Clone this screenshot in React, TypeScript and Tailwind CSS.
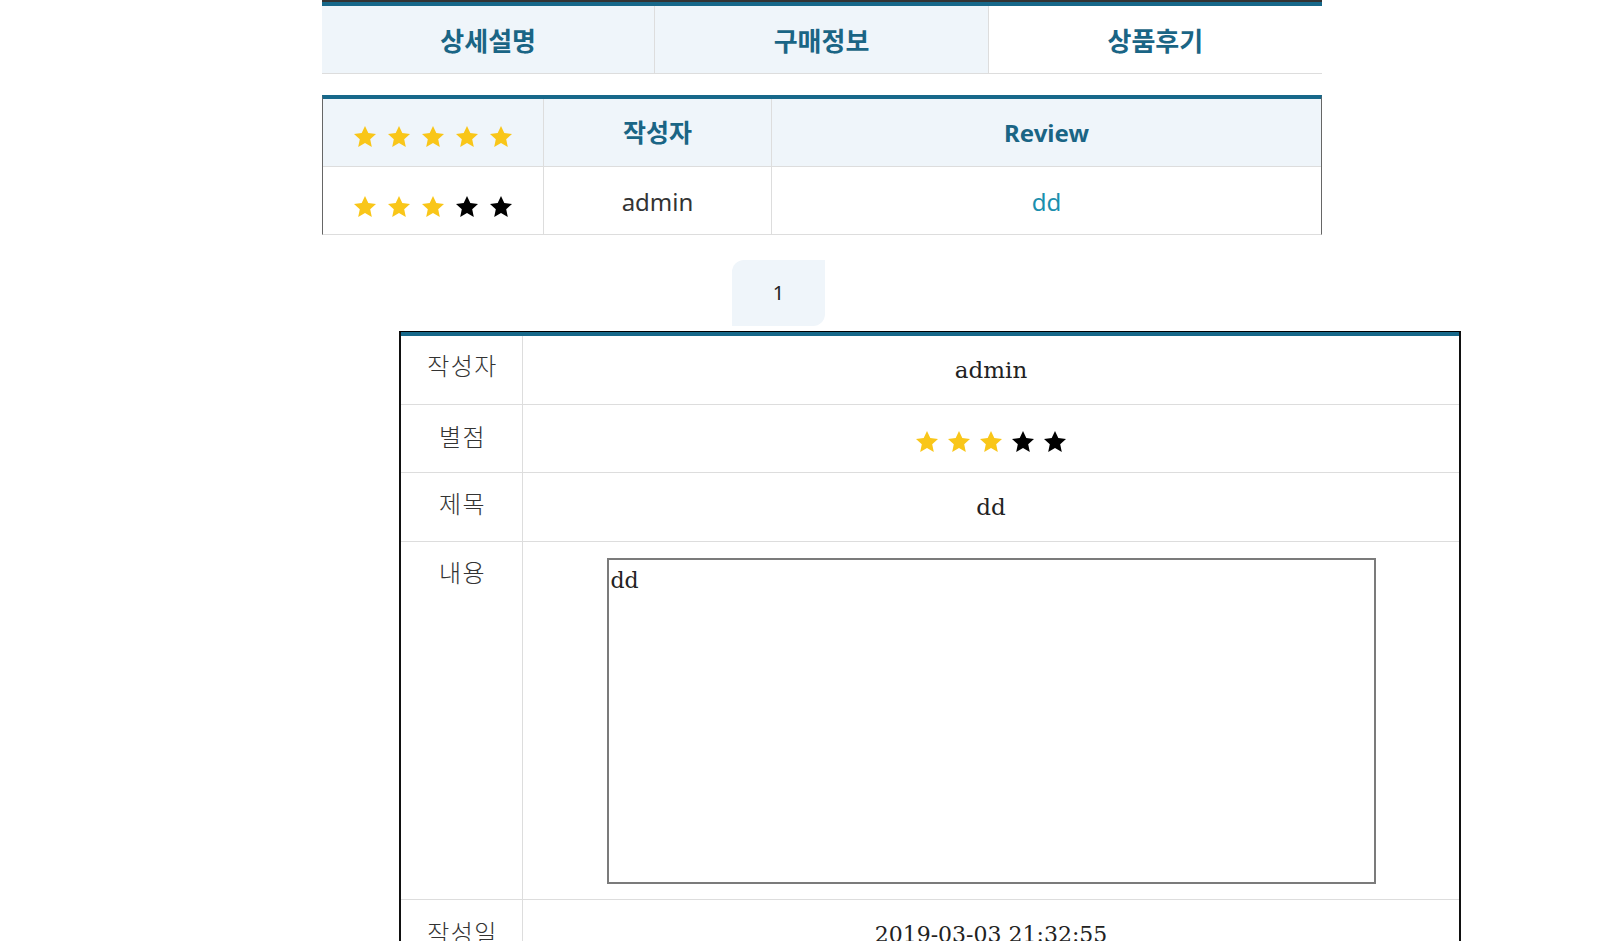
type StarRowProps = {
  filled: number;
  size: number;
  gapClass: string;
};

const Star = ({ color, size }: { color: string; size: number }) => (
  <svg width={size} height={size} viewBox="0 0 24 24" fill={color}>
    <polygon points="12,1 15.3,8.1 23,8.9 17.2,14.2 18.8,22 12,18 5.2,22 6.8,14.2 1,8.9 8.7,8.1" />
  </svg>
);

const StarRow: React.FC<StarRowProps> = ({ filled, size, gapClass }) => (
  <div className={`flex items-center ${gapClass}`}>
    {[0, 1, 2, 3, 4].map((i) => (
      <Star key={i} size={size} color={i < filled ? "#f9c619" : "#000000"} />
    ))}
  </div>
);

const tabs = [
  { label: "상세설명", active: false },
  { label: "구매정보", active: false },
  { label: "상품후기", active: true },
];

const labelCls =
  "flex justify-center border-r border-r-[#dddddd] pl-[2px] font-['Noto_Sans_CJK_KR',sans-serif] font-light text-[24px] tracking-[1.5px] text-[#333]";
const valueCls =
  "flex items-center justify-center font-['DejaVu_Serif','Noto_Sans_CJK_KR',serif] text-[23px] text-[#222]";

export default function App() {
  return (
    <div className="min-h-screen bg-white font-['Noto_Sans','Noto_Sans_CJK_KR',sans-serif]">
      {/* tabs */}
      <div className="ml-[322px] w-[1000px] border-t-2 border-t-[#333333]">
        <div className="grid grid-cols-3 border-t-4 border-t-[#17688a] border-b border-b-[#dddddd]">
          {tabs.map((t, i) => (
            <div
              key={t.label}
              className={`flex h-[67px] items-center justify-center pt-[3px] text-[26px] font-bold text-[#1a6585] ${
                t.active ? "bg-white" : "bg-[#eff5fa]"
              } ${i < 2 ? "border-r border-r-[#dddddd]" : ""}`}
            >
              {t.label}
            </div>
          ))}
        </div>
      </div>

      {/* review list */}
      <div className="ml-[322px] mt-[21px] w-[1000px] border-t-4 border-t-[#17688a] border-x border-x-[#666666] border-b border-b-[#dddddd]">
        <div className="grid h-[68px] grid-cols-[221px_228px_1fr] border-b border-b-[#dddddd] bg-[#eff5fa]">
          <div className="flex items-center justify-center border-r border-r-[#dddddd] pt-[9px]">
            <StarRow filled={5} size={24} gapClass="gap-[10px]" />
          </div>
          <div className="flex items-center justify-center border-r border-r-[#dddddd] text-[25px] font-bold text-[#1a6585]">
            작성자
          </div>
          <div className="flex items-center justify-center text-[24px] font-bold text-[#1a6585]">
            Review
          </div>
        </div>
        <div className="grid h-[67px] grid-cols-[221px_228px_1fr]">
          <div className="flex items-center justify-center border-r border-r-[#dddddd] pt-[12px]">
            <StarRow filled={3} size={24} gapClass="gap-[10px]" />
          </div>
          <div className="flex items-center justify-center border-r border-r-[#dddddd] pt-[2px] text-[24px] text-[#333]">
            admin
          </div>
          <div className="flex items-center justify-center pt-[2px] text-[24px] text-[#1b8fae]">
            dd
          </div>
        </div>
      </div>

      {/* pagination */}
      <div className="ml-[732px] mt-[25px] flex h-[66px] w-[93px] items-center justify-center rounded-tl-[12px] rounded-br-[12px] bg-[#eff5fa] text-[20px] text-[#222]">
        1
      </div>

      {/* review detail */}
      <div className="ml-[399px] mt-[5px] w-[1062px] border-t border-t-black border-x-2 border-x-[#111111]">
        <div className="border-t-4 border-t-[#17688a]">
          <div className="grid h-[69px] grid-cols-[122px_1fr] border-b border-b-[#dddddd]">
            <div className={`${labelCls} items-center pb-[10px]`}>작성자</div>
            <div className={valueCls}>admin</div>
          </div>
          <div className="grid h-[68px] grid-cols-[122px_1fr] border-b border-b-[#dddddd]">
            <div className={`${labelCls} items-center pb-[6px]`}>별점</div>
            <div className="flex items-center justify-center pt-[6px]">
              <StarRow filled={3} size={24} gapClass="gap-[8px]" />
            </div>
          </div>
          <div className="grid h-[69px] grid-cols-[122px_1fr] border-b border-b-[#dddddd]">
            <div className={`${labelCls} items-center pb-[8px]`}>제목</div>
            <div className={valueCls}>dd</div>
          </div>
          <div className="grid h-[358px] grid-cols-[122px_1fr] border-b border-b-[#dddddd]">
            <div className={`${labelCls} items-start pt-[12px]`}>내용</div>
            <div className="flex items-center justify-center">
              <textarea
                readOnly
                defaultValue="dd"
                className="h-[326px] w-[769px] resize-none border-2 border-[#7b7b7b] bg-white px-[2px] pt-[6px] font-['DejaVu_Serif',serif] text-[22px] leading-[30px] text-[#222] outline-none"
              />
            </div>
          </div>
          <div className="grid h-[68px] grid-cols-[122px_1fr]">
            <div className={`${labelCls} items-center pb-[4px]`}>작성일</div>
            <div className="flex items-center justify-center font-['DejaVu_Serif','Noto_Sans_CJK_KR',serif] text-[22px] text-[#222]">
              2019-03-03 21:32:55
            </div>
          </div>
        </div>
      </div>
    </div>
  );
}
